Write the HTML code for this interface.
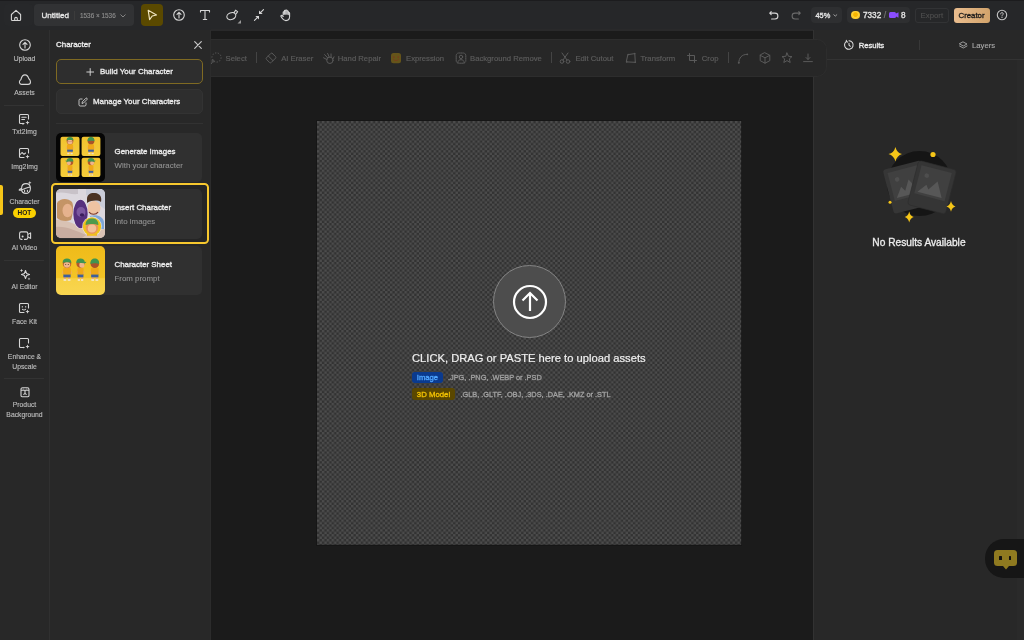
<!DOCTYPE html>
<html><head><meta charset="utf-8">
<style>
*{margin:0;padding:0;box-sizing:border-box}
html,body{width:1024px;height:640px;overflow:hidden;background:#1b1b1b;font-family:"Liberation Sans",sans-serif;color:#e8e8e8;-webkit-font-smoothing:antialiased}
.a{position:absolute}
svg{position:absolute;overflow:visible}
.t{position:absolute;white-space:nowrap;line-height:1}
.b{font-weight:700}
.sb{font-weight:400;-webkit-text-stroke:0.32px currentColor}
#top{left:0;top:0;width:1024px;height:29.5px;background:#262729;border-top:1px solid #1c1c1e}
#side{left:0;top:29.5px;width:49px;height:611px;background:#282828}
#sidediv{left:48.8px;top:29.5px;width:1px;height:611px;background:#303030}
#panel{left:49.8px;top:29.5px;width:161px;height:611px;background:#282828;border-right:1.5px solid #2c2c2c}
#right{left:813px;top:29.5px;width:211px;height:611px;background:#282828;border-left:1px solid #323232}
.sl{position:absolute;font-size:6.8px;color:#bcbcbc;-webkit-text-stroke:0.14px currentColor;text-align:center;width:49px;left:0;line-height:1;white-space:nowrap}
.sep{position:absolute;left:4.4px;width:39.6px;height:1px;background:#333}
.ic{stroke:#d6d6d6;fill:none;stroke-width:1.1;stroke-linecap:round;stroke-linejoin:round}
.tb{stroke:#5a5a5a;fill:none;stroke-width:1;stroke-linecap:round;stroke-linejoin:round}
.tbt{position:absolute;font-size:7.7px;color:#5c5c5c;line-height:1;white-space:nowrap;top:54.7px;-webkit-text-stroke:0.18px currentColor}
.card{position:absolute;left:56px;width:146px;height:49px;background:#303030;border-radius:5px}
.thumb{position:absolute;left:0;top:0;width:49px;height:49px;border-radius:5px;overflow:hidden}
.thumb svg{filter:blur(0.35px)}
.ct{position:absolute;left:58.5px;font-size:7.9px;font-weight:400;-webkit-text-stroke:0.34px currentColor;color:#ececec;line-height:1;white-space:nowrap}
.cs{position:absolute;left:58.5px;font-size:7.9px;color:#929292;-webkit-text-stroke:0.1px currentColor;line-height:1;white-space:nowrap}
#root{position:absolute;left:0;top:0;width:1024px;height:640px;will-change:transform}
</style></head><body><div id="root">
<div id="top" class="a"></div>
<div id="side" class="a"></div>
<div id="sidediv" class="a"></div>
<div id="panel" class="a"></div>
<div id="right" class="a"></div>
<div class="a" style="left:210.8px;top:29.3px;width:602.5px;height:1.5px;background:#29292a"></div>

<!-- ===== TOP BAR ===== -->
<div class="a" style="left:4px;top:4px;width:29px;height:22px;background:#27282a;border-radius:4px"></div>
<svg width="14" height="14" style="left:9px;top:8px" viewBox="0 0 14 14"><path class="ic" stroke-width="1.2" d="M2.4 6.5 L7 2.3 L11.6 6.5 V11.4 C11.6 12.1 11.2 12.5 10.5 12.5 H3.5 C2.8 12.5 2.4 12.1 2.4 11.4 Z M5.7 12.5 V10.6 C5.7 9.9 6.2 9.4 7 9.4 C7.8 9.4 8.3 9.9 8.3 10.6 V12.5"/></svg>
<div class="a" style="left:34px;top:3.7px;width:99.5px;height:22px;background:#313234;border-radius:4px"></div>
<div class="t sb" style="left:41.5px;top:11.7px;font-size:8.1px;color:#e6e6e6">Untitled</div>
<div class="a" style="left:74px;top:10.5px;width:1px;height:9px;background:#3c3c3c"></div>
<div class="t" style="left:80px;top:12.5px;font-size:6.4px;color:#8c8c8c;-webkit-text-stroke:0.15px currentColor">1536 × 1536</div>
<svg width="6" height="4" style="left:120px;top:14px"><path d="M0.5 0.5 L3 3 L5.5 0.5" stroke="#8c8c8c" fill="none" stroke-width="0.9"/></svg>

<div class="a" style="left:141px;top:4px;width:22px;height:22px;background:#5a4900;border-radius:4px"></div>
<svg width="14" height="14" style="left:145px;top:8px" viewBox="0 0 14 14"><path d="M3.2 2.3 L11.5 7 L7.2 8 L4.6 11.6 Z" stroke="#f0e6c0" fill="none" stroke-width="1.15" stroke-linejoin="round"/></svg>
<svg width="14" height="14" style="left:171.5px;top:8.2px" viewBox="0 0 14 14"><circle class="ic" cx="7" cy="7" r="5.3" stroke-width="1.15"/><path class="ic" stroke-width="1" d="M7 10 V4.3 M5 6.3 L7 4.3 L9 6.3"/></svg>
<svg width="14" height="14" style="left:198px;top:8px" viewBox="0 0 14 14"><path class="ic" d="M2.5 4 V2.5 H11.5 V4 M7 2.5 V11.5 M5.3 11.5 H8.7" stroke-width="1.3"/></svg>
<svg width="14" height="14" style="left:225px;top:8px" viewBox="0 0 14 14"><ellipse class="ic" cx="6.3" cy="8.1" rx="4.6" ry="3.4" transform="rotate(-22 6.3 8.1)"/><path class="ic" d="M9.2 4.4 L10.6 2.2 L12.6 3.6 L11.2 5.8"/><path d="M12.5 15.6 L16 15.6 L16 12Z" fill="#9a9a9a"/></svg>
<svg width="14" height="14" style="left:251.5px;top:8px" viewBox="0 0 14 14"><path class="ic" d="M11.5 1.6 L8 5.1 M2.5 12.4 L6 8.9"/><path d="M7 6.1 L7 2.4 L10.7 6.1Z M7 7.9 L3.3 7.9 L7 11.6Z" fill="#d6d6d6"/></svg>
<svg width="14" height="14" style="left:279px;top:8px" viewBox="0 0 14 14"><path class="ic" d="M4.2 6.8 V4.3 C4.2 3.5 5.4 3.5 5.4 4.3 V6.3 V2.8 C5.4 2 6.7 2 6.7 2.8 V6.2 V2.6 C6.7 1.8 8 1.8 8 2.6 V6.3 V3.6 C8 2.8 9.3 2.8 9.3 3.6 V6.6 V5.2 C9.3 4.4 10.6 4.4 10.6 5.2 V8.6 C10.6 11.2 9 12.6 6.9 12.6 C5 12.6 4 11.6 3 10 L2 8.4 C1.6 7.6 2.6 6.9 3.3 7.6 L4.2 8.5"/></svg>

<svg width="14" height="14" style="left:767px;top:8px" viewBox="0 0 14 14"><path class="ic" d="M4.2 3.6 L2.7 5.1 L4.2 6.6 M2.9 5.1 H8 C9.8 5.1 10.9 6.3 10.9 8 C10.9 9.8 9.8 11 8 11 H4.6" stroke-width="1.05"/></svg>
<svg width="14" height="14" style="left:789px;top:8px" viewBox="0 0 14 14"><path d="M9.8 3.6 L11.3 5.1 L9.8 6.6 M11.1 5.1 H6 C4.2 5.1 3.1 6.3 3.1 8 C3.1 9.8 4.2 11 6 11 H9.4" stroke="#6a6a6a" fill="none" stroke-width="1.05" stroke-linecap="round" stroke-linejoin="round"/></svg>
<div class="a" style="left:810.8px;top:6.9px;width:31.3px;height:15.9px;background:#2e2f31;border-radius:4px"></div>
<div class="t sb" style="left:815.5px;top:11.7px;font-size:7.4px;color:#e6e6e6">45%</div>
<svg width="6" height="4" style="left:833px;top:14px"><path d="M0.5 0.5 L2.3 2.1 L4.1 0.5" stroke="#aaa" fill="none" stroke-width="0.9"/></svg>
<div class="a" style="left:847.3px;top:6.9px;width:63px;height:15.9px;background:#2e2f31;border-radius:4px"></div>
<div class="a" style="left:851.4px;top:10.6px;width:8.6px;height:8.6px;border-radius:50%;background:radial-gradient(circle at 50% 45%,#f7b500 0,#f7b500 30%,#ffd23a 45%,#f5bd10 100%)"></div>
<div class="t sb" style="left:863px;top:11.7px;font-size:8.2px;color:#e6e6e6">7332</div>
<div class="t" style="left:883.8px;top:11.4px;font-size:8.8px;color:#7a7a7a;-webkit-text-stroke:0.15px currentColor">/</div>
<div class="a" style="left:889px;top:12px;width:6.5px;height:6px;background:#8a4dff;border-radius:1.5px"></div>
<svg width="4" height="6" style="left:894.5px;top:12px"><path d="M0 2 L3.5 0.3 V5.7 L0 4Z" fill="#8a4dff"/></svg>
<div class="t sb" style="left:901px;top:11.7px;font-size:8.2px;color:#e6e6e6">8</div>
<div class="a" style="left:915.4px;top:8.4px;width:33.2px;height:14.2px;border:1px solid #323335;border-radius:3px"></div>
<div class="t" style="left:920.6px;top:12.2px;font-size:7.8px;color:#4e4e4e;-webkit-text-stroke:0.15px currentColor">Export</div>
<div class="a" style="left:954px;top:8px;width:36px;height:14.5px;border-radius:3px;background:linear-gradient(90deg,#e9bd8f,#d2a36b)"></div>
<div class="t sb" style="left:958.5px;top:11.7px;font-size:7.8px;color:#1a1a1a">Creator</div>
<svg width="14" height="14" style="left:995.3px;top:7.7px" viewBox="0 0 14 14"><circle cx="7" cy="7" r="4.7" stroke="#c4c4c4" stroke-width="1.1" fill="none"/><path d="M5.7 5.9 C5.7 5 6.3 4.6 7 4.6 C7.7 4.6 8.3 5.1 8.3 5.8 C8.3 6.6 7 6.9 7 7.9" stroke="#c4c4c4" stroke-width="1" fill="none" stroke-linecap="round"/><circle cx="7" cy="9.4" r="0.6" fill="#c4c4c4"/></svg>

<!-- canvas -->
<svg width="424.3" height="423.7" style="left:316.8px;top:120.9px;outline:1px solid rgba(0,0,0,.18)"><defs><pattern id="ck" width="4.86" height="4.86" patternUnits="userSpaceOnUse"><rect width="4.86" height="4.86" fill="#323232"/><rect width="2.43" height="2.43" fill="#4c4c4c"/><rect x="2.43" y="2.43" width="2.43" height="2.43" fill="#4c4c4c"/></pattern></defs><rect width="424.3" height="423.7" fill="url(#ck)"/></svg>

<div class="a" style="left:492.9px;top:265px;width:73px;height:73px;border-radius:50%;background:#4d4d4d;border:1px solid #858585"></div>
<svg width="40" height="40" style="left:509.5px;top:282px" viewBox="0 0 40 40"><circle cx="20" cy="20" r="16" stroke="#fff" stroke-width="2.2" fill="none"/><path d="M20 29 V11.5 M12.5 18.5 L20 11 L27.5 18.5" stroke="#fff" stroke-width="2.2" fill="none" stroke-linecap="butt" stroke-linejoin="miter"/></svg>
<div class="t" style="left:412px;top:353px;font-size:11.2px;color:#f0f0f0;-webkit-text-stroke:0.2px currentColor">CLICK, DRAG or PASTE here to upload assets</div>
<div class="a" style="left:412.2px;top:371.8px;width:31px;height:11.6px;background:#0a3a8e;border-radius:3px"></div>
<div class="t sb" style="left:416.8px;top:374px;font-size:7.65px;color:#4fa6ff">Image</div>
<div class="t sb" style="left:448px;top:374px;font-size:7.35px;color:#a0a0a0">.JPG, .PNG, .WEBP or .PSD</div>
<div class="a" style="left:412.2px;top:388.4px;width:43px;height:12px;background:#5a4700;border-radius:3px"></div>
<div class="t sb" style="left:416.8px;top:390.6px;font-size:7.8px;color:#f2c200">3D Model</div>
<div class="t sb" style="left:460.5px;top:391px;font-size:7.35px;color:#a0a0a0">.GLB, .GLTF, .OBJ, .3DS, .DAE, .KMZ or .STL</div>

<!-- ===== LEFT SIDEBAR ===== -->
<div class="a" style="left:0;top:185px;width:3px;height:30px;background:#f5c518;border-radius:0 2px 2px 0"></div>
<svg width="14" height="14" style="left:17.6px;top:38.3px" viewBox="0 0 14 14"><circle class="ic" cx="7" cy="7" r="5.3" stroke-width="1.15"/><path class="ic" stroke-width="1" d="M7 10 V4.3 M5 6.3 L7 4.3 L9 6.3"/></svg>
<div class="sl" style="top:55.6px">Upload</div>
<svg width="14" height="14" style="left:17.5px;top:73.3px" viewBox="0 0 14 14"><path class="ic" stroke-width="1.15" d="M3.8 11.4 C2.4 11.4 1.4 10.4 1.4 9.1 C1.4 8 2 7.2 2.9 6.6 C3.5 3.9 5 1.9 7 1.9 C9 1.9 10.2 3.6 10.9 5.8 C11.9 6.6 12.5 7.8 12.5 9.1 C12.5 10.4 11.5 11.4 10.1 11.4 Z"/></svg>
<div class="sl" style="top:90.3px">Assets</div>
<div class="sep" style="top:104.8px"></div>
<svg width="14" height="14" style="left:16.8px;top:111.6px" viewBox="0 0 14 14"><path class="ic" d="M11.5 7 V3.5 C11.5 2.9 11.1 2.5 10.5 2.5 H3.5 C2.9 2.5 2.5 2.9 2.5 3.5 V10.5 C2.5 11.1 2.9 11.5 3.5 11.5 H7 M4.8 5.3 H9.2 M4.8 7.5 H7.5"/><path d="M10.5 8.5 L11.1 10 L12.6 10.6 L11.1 11.2 L10.5 12.7 L9.9 11.2 L8.4 10.6 L9.9 10Z" fill="#d6d6d6"/><circle cx="6" cy="11.7" r="0.9" fill="#d6d6d6"/></svg>
<div class="sl" style="top:129.1px">Txt2Img</div>
<svg width="14" height="14" style="left:16.8px;top:146px" viewBox="0 0 14 14"><path class="ic" d="M11.5 7 V3.5 C11.5 2.9 11.1 2.5 10.5 2.5 H3.5 C2.9 2.5 2.5 2.9 2.5 3.5 V10.5 C2.5 11.1 2.9 11.5 3.5 11.5 H7 M2.7 9 L5 6.5 L7 8.3 L8.5 7"/><path d="M10.5 8.5 L11.1 10 L12.6 10.6 L11.1 11.2 L10.5 12.7 L9.9 11.2 L8.4 10.6 L9.9 10Z" fill="#d6d6d6"/></svg>
<div class="sl" style="top:164.1px">Img2Img</div>
<svg width="14" height="14" style="left:17.5px;top:180px" viewBox="0 0 14 14"><path class="ic" d="M3.6 8.3 C3.6 5.2 5.6 3.6 8 3.6 C10.6 3.6 12.4 5.4 12.4 8.4 C12.4 11.4 10.4 13.4 8 13.4 C5.6 13.4 3.8 11.6 3.6 9.6 M3.6 8.6 C2.2 9 1 9.6 1.2 10.2 C1.6 10.8 4 9.8 6.4 8.8 C8.6 7.8 11 6.6 12.4 7 M6.6 10.2 V11.4 M9.4 10.2 V11.4"/><path d="M11.8 1 L12.3 2.2 L13.5 2.7 L12.3 3.2 L11.8 4.4 L11.3 3.2 L10.1 2.7 L11.3 2.2Z" fill="#d6d6d6"/></svg>
<div class="sl" style="top:198.6px">Character</div>
<div class="a" style="left:12.8px;top:208px;width:23.2px;height:10px;background:#fad000;border-radius:5px"></div>
<div class="t b" style="left:12.8px;top:209.9px;width:23.2px;text-align:center;font-size:6.5px;color:#1a1a1a">HOT</div>
<svg width="14" height="14" style="left:17.5px;top:227.6px" viewBox="0 0 14 14"><path class="ic" d="M4 11.4 H3.2 C2.3 11.4 1.6 10.7 1.6 9.8 V5.5 C1.6 4.6 2.3 3.9 3.2 3.9 H8.2 C9.1 3.9 9.8 4.6 9.8 5.5 V9.8 C9.8 10.7 9.1 11.4 8.2 11.4 H6.5 M9.8 6.6 L12.6 4.9 V10.4 L9.8 8.7"/><circle cx="4.6" cy="8.6" r="1" fill="#d6d6d6"/></svg>
<div class="sl" style="top:245.4px">AI Video</div>
<div class="sep" style="top:259.9px"></div>
<svg width="14" height="14" style="left:17.5px;top:267px" viewBox="0 0 14 14"><path class="ic" d="M7.5 3.5 L8.6 6.4 L11.5 7.5 L8.6 8.6 L7.5 11.5 L6.4 8.6 L3.5 7.5 L6.4 6.4 Z"/><path d="M3.5 1.8 L4 3 L5.2 3.5 L4 4 L3.5 5.2 L3 4 L1.8 3.5 L3 3Z" fill="#d6d6d6"/><path d="M11 10.5 L11.4 11.5 L12.4 11.9 L11.4 12.3 L11 13.3 L10.6 12.3 L9.6 11.9 L10.6 11.5Z" fill="#d6d6d6"/></svg>
<div class="sl" style="top:284.3px">AI Editor</div>
<svg width="14" height="14" style="left:16.8px;top:301px" viewBox="0 0 14 14"><path class="ic" d="M11.5 7 V3.5 C11.5 2.9 11.1 2.5 10.5 2.5 H3.5 C2.9 2.5 2.5 2.9 2.5 3.5 V10.5 C2.5 11.1 2.9 11.5 3.5 11.5 H7 M5.3 5.5 V6 M8.7 5.5 V6 M5.5 8.3 C6.3 9 7.7 9 8.5 8.3"/><path d="M10.5 8.5 L11.1 10 L12.6 10.6 L11.1 11.2 L10.5 12.7 L9.9 11.2 L8.4 10.6 L9.9 10Z" fill="#d6d6d6"/></svg>
<div class="sl" style="top:319.3px">Face Kit</div>
<svg width="14" height="14" style="left:16.8px;top:336px" viewBox="0 0 14 14"><path class="ic" d="M11.5 7 V3.5 C11.5 2.9 11.1 2.5 10.5 2.5 H3.5 C2.9 2.5 2.5 2.9 2.5 3.5 V10.5 C2.5 11.1 2.9 11.5 3.5 11.5 H7"/><path d="M10.5 8.5 L11.1 10 L12.6 10.6 L11.1 11.2 L10.5 12.7 L9.9 11.2 L8.4 10.6 L9.9 10Z" fill="#d6d6d6"/><circle cx="6.5" cy="11.5" r="0.8" fill="#d6d6d6"/></svg>
<div class="sl" style="top:354.4px">Enhance &amp;</div>
<div class="sl" style="top:363.6px">Upscale</div>
<div class="sep" style="top:377.6px"></div>
<svg width="14" height="14" style="left:17.5px;top:384.6px" viewBox="0 0 14 14"><path class="ic" stroke-width="1.15" d="M3 4.4 C3 3.3 3.6 2.8 4.6 2.8 H9.4 C10.4 2.8 11 3.3 11 4.4 V10.6 C11 11.4 10.6 11.7 9.9 11.7 H4.1 C3.4 11.7 3 11.4 3 10.6 Z M3 5.2 H11 M7 5.2 V8.6 M5.8 9.4 L7 8.4 L8.2 9.4"/><circle cx="5.2" cy="4.1" r=".5" fill="#d6d6d6"/><circle cx="8.8" cy="4.1" r=".5" fill="#d6d6d6"/></svg>
<div class="sl" style="top:402.2px">Product</div>
<div class="sl" style="top:411.8px">Background</div>

<!-- ===== CHARACTER PANEL ===== -->
<div class="t sb" style="left:56px;top:41px;font-size:7.95px;color:#ececec">Character</div>
<svg width="10" height="10" style="left:192.5px;top:40.2px" viewBox="0 0 10 10"><path d="M1.7 1.7 L8.3 8.3 M8.3 1.7 L1.7 8.3" stroke="#c8c8c8" stroke-width="1.2" fill="none" stroke-linecap="round"/></svg>
<div class="a" style="left:56px;top:59px;width:147px;height:25px;background:#2e2e2e;border:1px solid #7f6a22;border-radius:5px"></div>
<svg width="10" height="10" style="left:84.9px;top:66.8px" viewBox="0 0 10 10"><path d="M5.2 1.2 V8.8 M1.4 5 H9" stroke="#d8d8d8" stroke-width="0.95" fill="none"/></svg>
<div class="t sb" style="left:100px;top:68px;font-size:7.95px;color:#ececec">Build Your Character</div>
<div class="a" style="left:56px;top:89px;width:147px;height:25px;background:#2e2e2e;border:1px solid #333;border-radius:5px"></div>
<svg width="10" height="10" style="left:77.5px;top:96.5px" viewBox="0 0 10 10"><path d="M8 5.5 V7.8 C8 8.5 7.5 9 6.8 9 H2.2 C1.5 9 1 8.5 1 7.8 V3.2 C1 2.5 1.5 2 2.2 2 H4.5 M4 6.5 L4.3 4.8 L7.8 1.3 C8.1 1 8.7 1 9 1.3 C9.3 1.6 9.3 2.2 9 2.5 L5.5 6 Z" stroke="#d0d0d0" stroke-width="0.9" fill="none" stroke-linejoin="round"/></svg>
<div class="t sb" style="left:93px;top:97.5px;font-size:7.9px;color:#ececec">Manage Your Characters</div>
<div class="a" style="left:56px;top:123px;width:147px;height:1px;background:#323232"></div>

<!-- card 1 -->
<svg width="0" height="0" style="left:0;top:0"><defs>
<g id="kbody">
 <path d="M-2.4 13.2 H-0.9 V15.5 H-2.4Z M0.9 13.2 H2.4 V15.5 H0.9Z" fill="#e9a77a"/>
 <path d="M-2.9 15.2 H-0.6 V16.3 H-2.9Z M0.6 15.2 H2.9 V16.3 H0.6Z" fill="#f2ece4"/>
 <path d="M-3.1 10.8 H3.1 V13.5 H-3.1Z" fill="#3f5f9c"/>
 <path d="M-3.2 6.2 C-3.2 5.6 -2.7 5.3 -2 5.3 H2 C2.7 5.3 3.2 5.6 3.2 6.2 L3.5 10 L3.1 11.2 H-3.1 L-3.5 10Z" fill="#f0a818"/>
 <path d="M-3.4 7 L-4.1 10.4 H-3.2Z M3.4 7 L4.1 10.4 H3.2Z" fill="#e9a77a"/>
</g>
<g id="kid">
 <use href="#kbody"/>
 <circle cx="0" cy="1.9" r="3.6" fill="#b4582a"/>
 <ellipse cx="0" cy="2.9" rx="2.8" ry="2.4" fill="#f0b68c"/>
 <circle cx="-1.1" cy="2.6" r=".45" fill="#4a3a30"/><circle cx="1.1" cy="2.6" r=".45" fill="#4a3a30"/>
 <path d="M-3.7 1.3 C-3.8 -1.3 -2.2 -2.4 0 -2.4 C2.2 -2.4 3.8 -1.3 3.7 1.3 C2 0.6 -2 0.6 -3.7 1.3Z" fill="#3f9550"/>
</g>
<g id="kidside">
 <use href="#kbody" transform="scale(.8,1)"/>
 <circle cx="0" cy="1.9" r="3.5" fill="#b4582a"/>
 <ellipse cx="1.2" cy="3" rx="2.2" ry="2.3" fill="#f0b68c"/>
 <path d="M-3.6 1.4 C-3.7 -1.3 -2.2 -2.4 0 -2.4 C2.2 -2.4 3.6 -1.3 3.6 0.6 L5 0.2 C4.8 1.2 4 1.6 3 1.6 C1 1.2 -2 1 -3.6 1.4Z" fill="#3f9550"/>
</g>
<g id="kidback">
 <use href="#kbody"/>
 <circle cx="0" cy="1.9" r="3.6" fill="#a9532a"/>
 <path d="M-3.7 2.2 C-3.8 -1.3 -2.2 -2.4 0 -2.4 C2.2 -2.4 3.8 -1.3 3.7 2.2 C2 1.4 -2 1.4 -3.7 2.2Z" fill="#3f9550"/>
</g>
</defs></svg>
<div class="card" style="top:133px;height:48.5px">
  <div class="thumb" style="background:#050505">
    <svg width="49" height="49" style="left:0;top:0">
      <defs><linearGradient id="ty" x1="0" y1="0" x2="0" y2="1"><stop offset="0" stop-color="#f0c22e"/><stop offset="1" stop-color="#f5cc3a"/></linearGradient></defs>
      <rect x="4.5" y="3.7" width="19" height="19.2" rx="2" fill="url(#ty)"/>
      <rect x="25.6" y="3.7" width="18.8" height="19.2" rx="2" fill="url(#ty)"/>
      <rect x="4.5" y="24.8" width="19" height="19.2" rx="2" fill="url(#ty)"/>
      <rect x="25.6" y="24.8" width="18.8" height="19.2" rx="2" fill="url(#ty)"/>
      <use href="#kid" transform="translate(14,6.2) scale(0.93)"/>
      <use href="#kidback" transform="translate(35,6.2) scale(0.93)"/>
      <use href="#kidside" transform="translate(14,27.3) scale(-0.93,0.93)"/>
      <use href="#kidside" transform="translate(35,27.3) scale(0.93)"/>
    </svg>
  </div>
  <div class="ct" style="top:15px">Generate Images</div>
  <div class="cs" style="top:28.5px">With your character</div>
</div>
<!-- card 2 -->
<div class="a" style="left:51.4px;top:182.7px;width:157.6px;height:61.3px;border:2.2px solid #f7c82e;border-radius:4.5px;background:#252525"></div>
<div class="card" style="top:189px;height:49.5px">
  <div class="thumb" style="background:#d9d6dc">
    <svg width="49" height="49" style="left:0;top:0">
      <rect x="0" y="0" width="49" height="49" fill="#dcd8de"/>
      <path d="M0 4 C8 2 14 6 22 5 L22 0 H0Z" fill="#c8c2c8"/>
      <path d="M30 0 H49 V20 C44 18 40 10 30 6Z" fill="#c9ccd8"/>
      <path d="M0 31 C8 30 16 34 24 38 C30 40 36 42 49 40 V49 H0Z" fill="#d9c2b4"/>
      <path d="M0 38 C10 37 20 42 30 46 L26 49 H0Z" fill="#c9ada0"/>
      <path d="M1 14 C4 9 12 9 16 13 C18 17 17 26 15 31 C10 33 4 32 1 29Z" fill="#c49466"/>
      <ellipse cx="11.5" cy="21.5" rx="5" ry="6.8" fill="#e6b28e"/>
      <path d="M31 10 C31 5 35 3.5 39 4 C44 4.5 46 8 45 13 C42 11 36 11 31 14Z" fill="#4a3324"/>
      <ellipse cx="38" cy="19" rx="6.5" ry="7" fill="#eec3a2"/>
      <path d="M33 23 C35 26 40 26 42 23" stroke="#7a3a30" stroke-width="1.2" fill="none"/>
      <path d="M34 27 C40 25 47 27 48 33 L48 40 H34Z" fill="#7ea6d6"/>
      <ellipse cx="24.5" cy="25" rx="7.8" ry="14.8" fill="#fff" opacity=".55"/>
      <ellipse cx="24.5" cy="25" rx="7.2" ry="14.2" fill="#56307e"/>
      <ellipse cx="25" cy="23" rx="4.5" ry="5" fill="#7c58a0"/>
      <ellipse cx="26" cy="26" rx="2.2" ry="1.8" fill="#3a1c5a"/>
      <circle cx="36" cy="37.4" r="9.8" fill="#fff" opacity=".7"/>
      <circle cx="36" cy="37.4" r="9.2" fill="#f0c21c"/>
      <circle cx="36" cy="38.6" r="6.3" fill="#e8955e"/>
      <ellipse cx="36" cy="39.6" rx="4.2" ry="4" fill="#f2c09a"/>
      <path d="M29.6 36 C29.5 31.5 32.5 29.6 36 29.6 C39.5 29.6 42.5 31.5 42.4 36 C39 34.5 33 34.5 29.6 36Z" fill="#4e9a4c"/>
      <path d="M31 44.5 C33 46.5 39 46.5 41 44.5 L41 46.8 H31Z" fill="#f2b21c"/>
    </svg>
  </div>
  <div class="ct" style="top:15px">Insert Character</div>
  <div class="cs" style="top:29px">Into images</div>
</div>
<!-- card 3 -->
<div class="card" style="top:246px;height:48.5px">
  <div class="thumb" style="background:linear-gradient(180deg,#efbb1a 0%,#f3c425 64%,#f7d145 67%,#f9d650 100%)">
    <svg width="49" height="49" style="left:0;top:0">
      <use href="#kid" transform="translate(11,15.4) scale(1.18)"/>
      <use href="#kidside" transform="translate(24.5,15.4) scale(1.18)"/>
      <use href="#kidback" transform="translate(38.8,15.4) scale(1.18)"/>
    </svg>
  </div>
  <div class="ct" style="top:14.5px">Character Sheet</div>
  <div class="cs" style="top:28.5px">From prompt</div>
</div>

<!-- ===== RIGHT PANEL ===== -->
<svg width="12" height="12" style="left:843px;top:39px" viewBox="0 0 12 12"><path d="M3.2 2.6 A4.3 4.3 0 1 0 6 1.7 M3.4 1.2 L3.2 2.6 L4.6 3.1 M6 4.2 V6.2 L7.4 7.3" stroke="#e0e0e0" stroke-width="1.05" fill="none" stroke-linecap="round" stroke-linejoin="round"/></svg>
<div class="t sb" style="left:858.7px;top:41.7px;font-size:7.65px;color:#ececec">Results</div>
<div class="a" style="left:919px;top:40px;width:1px;height:10px;background:#383838"></div>
<svg width="12" height="12" style="left:956.5px;top:39px" viewBox="0 0 12 12"><path d="M6.3 3 L10 5 L6.3 7 L2.6 5 Z M2.6 7 L6.3 9 L10 7" stroke="#a0a0a0" stroke-width="0.95" fill="none" stroke-linejoin="round" stroke-linecap="round"/></svg>
<div class="t" style="left:972px;top:42px;font-size:7.7px;color:#aaaaaa;-webkit-text-stroke:0.12px currentColor">Layers</div>
<div class="a" style="left:814px;top:58.8px;width:210px;height:1px;background:#333"></div>
<div class="a" style="left:1017px;top:60px;width:7px;height:580px;background:#2a2a2a"></div>

<svg width="100" height="100" style="left:870px;top:135px" viewBox="870 135 100 100">
<circle cx="919.5" cy="183.6" r="32.5" fill="#151515"/>
<g transform="translate(907.4,187.1) rotate(-14.6)">
 <rect x="-19.6" y="-22.75" width="39.2" height="45.5" rx="3" fill="#363636"/>
 <rect x="-15.6" y="-18.75" width="31.2" height="29" fill="#404040"/>
 <circle cx="-8" cy="-10" r="2.3" fill="#4e4e4e"/>
 <path d="M-13 8 L-6 -2 L-3 3 L3 -7 L11 8Z" fill="#575757"/>
</g>
<g transform="translate(932,187.3) rotate(14.5)">
 <rect x="-19.6" y="-22.75" width="39.2" height="45.5" rx="3" fill="#353535" stroke="#2c2c2c" stroke-width="0.6"/>
 <rect x="-15.6" y="-18.75" width="31.2" height="29" fill="#404040"/>
 <circle cx="-8" cy="-10" r="2.3" fill="#4e4e4e"/>
 <path d="M-13 8 L-6 -1 L-3 3 L4 -7 L12 8Z" fill="#575757"/>
</g>
<path d="M895.4 147 Q897 153 902 154 Q897 155.5 895.4 161.5 Q894 155.5 888.5 154 Q894 153 895.4 147Z" fill="#f5c518"/>
<circle cx="933" cy="154.5" r="2.6" fill="#f5c518"/>
<circle cx="890" cy="202.3" r="1.5" fill="#f5c518"/>
<path d="M951 201 Q952 205.5 955.5 206.4 Q952 207.3 951 211.8 Q950 207.3 946.5 206.4 Q950 205.5 951 201Z" fill="#f5c518"/>
<path d="M909.2 211.5 Q910.2 216 913.7 217 Q910.2 218 909.2 222.5 Q908.2 218 904.7 217 Q908.2 216 909.2 211.5Z" fill="#f5c518"/>
</svg>
<div class="t sb" style="left:872.3px;top:237.8px;font-size:10.2px;color:#ececec">No Results Available</div>

<!-- ===== CANVAS AREA ===== -->
<div class="a" style="left:210.8px;top:39.3px;width:616.4px;height:37.4px;background:#272727;border:1px solid #2d2d2d;border-left:none;border-radius:0 10px 10px 0"></div>
<svg width="14" height="14" style="left:208.5px;top:51px" viewBox="0 0 14 14"><circle cx="7.5" cy="6.5" r="4.6" stroke="#5a5a5a" fill="none" stroke-width="1" stroke-dasharray="1.3 1.5"/><circle cx="4" cy="10" r="1.1" stroke="#5a5a5a" fill="none" stroke-width=".9"/><path d="M3.3 11 L2.2 13" stroke="#5a5a5a" stroke-width=".9"/></svg>
<div class="tbt" style="left:225.5px">Select</div>
<div class="a" style="left:256px;top:52px;width:1px;height:11px;background:#444"></div>
<svg width="14" height="14" style="left:264px;top:51px" viewBox="0 0 14 14"><path class="tb" d="M8.3 2.4 L11.6 5.7 C12 6.1 12 6.7 11.6 7.1 L7.1 11.6 C6.7 12 6.1 12 5.7 11.6 L2.4 8.3 C2 7.9 2 7.3 2.4 6.9 L6.9 2.4 C7.3 2 7.9 2 8.3 2.4Z M4.3 5 L9 9.7"/></svg>
<div class="tbt" style="left:281.2px">AI Eraser</div>
<svg width="14" height="14" style="left:321px;top:51px" viewBox="0 0 14 14"><circle class="tb" cx="8.9" cy="9.3" r="3.2" stroke-width="1.1"/><path class="tb" stroke-width="1.1" d="M6.6 6.8 L3.6 3.6 M8.2 6 L6.6 2.4 M10.1 6.2 L10 2.9 M12 8 L13 5.8 M6 8.6 L2.6 6.8"/></svg>
<div class="tbt" style="left:337.8px">Hand Repair</div>
<svg width="11" height="11" style="left:391.2px;top:52.7px" viewBox="0 0 11 11"><rect x="0" y="0" width="10" height="10.3" rx="2.5" fill="#65541a"/><path d="M2.3 3.6 L3.5 4.2 L2.3 4.8 M7.7 3.6 L6.5 4.2 L7.7 4.8 M2.5 6.6 C3.8 8 6.2 8 7.5 6.6" stroke="#7a3a1c" stroke-width=".8" fill="none" stroke-linecap="round"/></svg>
<div class="tbt" style="left:406px">Expression</div>
<svg width="14" height="14" style="left:453.5px;top:51px" viewBox="0 0 14 14"><rect class="tb" x="2.2" y="2" width="9.6" height="10.2" rx="2.4" stroke-dasharray="1.2 .9"/><circle class="tb" cx="7" cy="5.9" r="1.7"/><path class="tb" d="M3.8 11.8 C3.8 9.5 5.3 8.7 7 8.7 C8.7 8.7 10.2 9.5 10.2 11.8"/></svg>
<div class="tbt" style="left:470px">Background Remove</div>
<div class="a" style="left:550.5px;top:52px;width:1px;height:11px;background:#444"></div>
<svg width="14" height="14" style="left:558px;top:51px" viewBox="0 0 14 14"><circle class="tb" cx="4" cy="10.5" r="1.8"/><circle class="tb" cx="10" cy="10.5" r="1.8"/><path class="tb" d="M5 9 L10 2 M9 9 L4 2"/></svg>
<div class="tbt" style="left:575.4px">Edit Cutout</div>
<svg width="14" height="14" style="left:624px;top:51px" viewBox="0 0 14 14"><path class="tb" d="M4.2 3.6 L10.8 2.6 L11.3 11.3 L2.7 10.9 Z"/><circle cx="4.2" cy="3.6" r=".8" fill="#5a5a5a"/><circle cx="10.8" cy="2.6" r=".8" fill="#5a5a5a"/><circle cx="11.3" cy="11.3" r=".8" fill="#5a5a5a"/><circle cx="2.7" cy="10.9" r=".8" fill="#5a5a5a"/></svg>
<div class="tbt" style="left:640.4px">Transform</div>
<svg width="14" height="14" style="left:684.6px;top:51px" viewBox="0 0 14 14"><path class="tb" d="M4.5 2.5 V9.5 H11.5 M2.5 4.5 H9.5 V11.5"/></svg>
<div class="tbt" style="left:701.8px">Crop</div>
<div class="a" style="left:727.5px;top:52px;width:1px;height:11px;background:#444"></div>
<svg width="14" height="14" style="left:735.6px;top:51px" viewBox="0 0 14 14"><path class="tb" d="M2.8 11.8 C2.8 6.8 6 3.4 10.6 3.4"/><circle cx="2.8" cy="11.8" r="1" fill="#5a5a5a"/><circle cx="11.3" cy="3.3" r="0.9" fill="#5a5a5a"/></svg>
<svg width="14" height="14" style="left:757.5px;top:51px" viewBox="0 0 14 14"><path class="tb" d="M7 1.8 L11.8 4.3 V9.7 L7 12.2 L2.2 9.7 V4.3 Z M2.2 4.3 L7 6.8 L11.8 4.3 M7 6.8 V12.2"/></svg>
<svg width="14" height="14" style="left:779.5px;top:51px" viewBox="0 0 14 14"><path class="tb" d="M7 2 L8.5 5.3 L12 5.6 L9.3 7.9 L10.2 11.5 L7 9.6 L3.8 11.5 L4.7 7.9 L2 5.6 L5.5 5.3 Z"/></svg>
<svg width="14" height="14" style="left:801.2px;top:51px" viewBox="0 0 14 14"><path class="tb" d="M7 3 V8.4 M5 6.5 L7 8.5 L9 6.5 M2.6 10.6 H11.4"/></svg>

<!-- chat -->
<div class="a" style="left:984.5px;top:539px;width:60px;height:38.5px;border-radius:19px;background:#161616"></div>
<div class="a" style="left:994px;top:549.7px;width:23.3px;height:16.3px;border-radius:3.5px;background:#8f7a20"></div>
<svg width="6" height="4" style="left:1002.5px;top:565.5px"><path d="M0 0 H6 L3 3.5Z" fill="#8f7a20"/></svg>
<div class="a" style="left:999.4px;top:555.5px;width:2.8px;height:4.6px;background:#111;border-radius:.5px"></div>
<div class="a" style="left:1008.6px;top:555.5px;width:2.8px;height:4.6px;background:#111;border-radius:.5px"></div>
</div></body></html>
